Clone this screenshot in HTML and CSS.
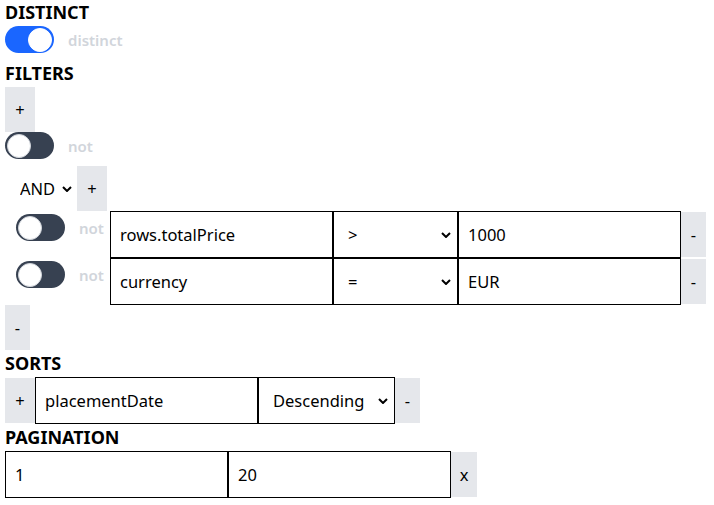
FILE: index.html
```html
<!DOCTYPE html>
<html lang="en">
<head>
    <meta charset="UTF-8">
    <meta name="viewport" content="width=device-width, initial-scale=1.0">
    <title>Query builder</title>
    <link rel="stylesheet" href="styles.css">
</head>
<body>
    <h3 class="section-title first">DISTINCT</h3>
    <label class="switch-row">
        <input type="checkbox" class="toggle" checked>
        <span class="switch-label">distinct</span>
    </label>

    <h3 class="section-title">FILTERS</h3>
    <div class="group">
        <button class="btn btn-add">+</button>
        <label class="switch-row">
            <input type="checkbox" class="toggle">
            <span class="switch-label">not</span>
        </label>

        <div class="group nested">
            <div class="group-head">
                <select class="logic-select">
                    <option>AND</option>
                    <option>OR</option>
                </select>
                <button class="btn btn-add">+</button>
            </div>

            <div class="filter-row">
                <label class="switch-row inline">
                    <input type="checkbox" class="toggle">
                    <span class="switch-label">not</span>
                </label>
                <input type="text" class="field" value="rows.totalPrice">
                <select class="field-select op-select">
                    <option>&gt;</option>
                    <option>=</option>
                </select>
                <input type="text" class="field" value="1000">
                <button class="btn btn-remove">-</button>
            </div>

            <div class="filter-row">
                <label class="switch-row inline">
                    <input type="checkbox" class="toggle">
                    <span class="switch-label">not</span>
                </label>
                <input type="text" class="field" value="currency">
                <select class="field-select op-select">
                    <option>=</option>
                    <option>&gt;</option>
                </select>
                <input type="text" class="field" value="EUR">
                <button class="btn btn-remove">-</button>
            </div>
        </div>

        <button class="btn btn-remove">-</button>
    </div>

    <h3 class="section-title">SORTS</h3>
    <div class="line-row">
        <button class="btn btn-add">+</button>
        <input type="text" class="field" value="placementDate">
        <select class="field-select dir-select">
            <option>Descending</option>
            <option>Ascending</option>
        </select>
        <button class="btn btn-remove">-</button>
    </div>

    <h3 class="section-title">PAGINATION</h3>
    <div class="line-row">
        <input type="text" class="field" value="1">
        <input type="text" class="field" value="20">
        <button class="btn btn-clear">x</button>
    </div>
</body>
</html>
```

FILE: styles.css
```css
* {
    box-sizing: border-box;
}
body {
    margin: 0;
    padding: 0 5px;
    font-family: "Noto Sans", "Open Sans", sans-serif;
    font-size: 16px;
    color: #000;
    background-color: #fff;
}
.section-title {
    margin: 0;
    font-size: 18px;
    line-height: 27px;
    font-weight: 700;
}
.section-title.first {
    margin-top: -1px;
}

/* toggles */
.switch-row {
    display: flex;
    align-items: center;
    gap: 14px;
    margin-bottom: 7px;
}
.switch-row.inline {
    width: 94px;
    flex: none;
    align-self: flex-start;
    margin: 3px 0 0 0;
}
.toggle {
    appearance: none;
    position: relative;
    flex: none;
    width: 49px;
    height: 27px;
    margin: 0;
    border-radius: 14px;
    background-color: #374151;
    cursor: pointer;
}
.toggle::after {
    content: "";
    position: absolute;
    top: 1.5px;
    left: 2px;
    width: 24px;
    height: 24px;
    border-radius: 50%;
    background-color: #fff;
    border: 1px solid #d1d5db;
    box-sizing: border-box;
}
.toggle:checked {
    background-color: #1a66ff;
}
.toggle:checked::after {
    left: 23px;
    border-color: #fff;
}
.switch-label {
    font-size: 15px;
    font-weight: 600;
    color: #d1d5db;
}

/* buttons */
.btn {
    display: block;
    flex: none;
    height: 45px;
    padding: 0;
    border: none;
    background-color: #e5e7eb;
    font-family: inherit;
    font-size: 16.5px;
    color: #000;
    cursor: pointer;
}
.btn-add {
    width: 30px;
}
.btn-remove {
    width: 25px;
}
.btn-clear {
    width: 26px;
}

/* filter groups */
.nested {
    padding-left: 11px;
}
.group-head {
    display: flex;
    align-items: center;
}
.logic-select {
    appearance: none;
    width: 61px;
    height: 45px;
    padding: 0 0 0 4px;
    border: none;
    font-family: inherit;
    font-size: 16.5px;
    color: #000;
    background: url("data:image/svg+xml,%3csvg xmlns='http://www.w3.org/2000/svg' viewBox='0 0 10 6'%3e%3cpath d='M1 1l4 4 4-4' fill='none' stroke='%23000' stroke-width='2'/%3e%3c/svg%3e") no-repeat right 5px center / 10px 6px;
}
.filter-row,
.line-row {
    display: flex;
    align-items: center;
}

/* fields */
.field {
    flex: none;
    width: 223px;
    height: 47px;
    margin: 0;
    padding: 0 9px;
    border: 1px solid #000;
    border-radius: 0;
    font-family: inherit;
    font-size: 16.5px;
    color: #000;
    outline: none;
}
.field-select {
    appearance: none;
    flex: none;
    height: 47px;
    margin: 0;
    padding: 0 28px 0 14px;
    border: 1px solid #000;
    border-radius: 0;
    font-family: inherit;
    font-size: 16.5px;
    color: #000;
    background: #fff url("data:image/svg+xml,%3csvg xmlns='http://www.w3.org/2000/svg' viewBox='0 0 10 6'%3e%3cpath d='M1 1l4 4 4-4' fill='none' stroke='%23000' stroke-width='2'/%3e%3c/svg%3e") no-repeat right 6px center / 10px 6px;
}
.op-select {
    width: 125px;
}
.dir-select {
    width: 137px;
}
```
